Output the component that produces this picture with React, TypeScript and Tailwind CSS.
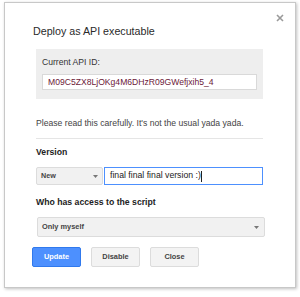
import React from "react";

export default function App() {
  return (
    <div className="w-[300px] h-[297px] bg-white overflow-hidden" style={{ fontFamily: '"Liberation Sans", Arial, sans-serif' }}>
      <div className="relative ml-[4px] mt-[2px] w-[292px] h-[286px] bg-white border border-[#c8c8c8] shadow-[1px_1px_3px_rgba(0,0,0,0.25)]">
        <svg className="absolute left-[271px] top-[11px]" width="8" height="8" viewBox="0 0 8 8">
          <path d="M1 1 L7 7 M7 1 L1 7" stroke="#9a9a9a" strokeWidth="1.6" />
        </svg>
        <div className="pt-[22px] pl-[28px] text-[10.7px] leading-[13px] text-[#2a2a2a]">Deploy as API executable</div>

        <div className="ml-[31px] mt-[11px] w-[227px] h-[50px] bg-[#eeeeee] pt-[8px]">
          <div className="pl-[6px] text-[8.6px] leading-[11px] text-[#333]">Current API ID:</div>
          <div className="ml-[6px] mt-[6px] w-[215px] h-[16px] bg-white border border-[#d9d9d9] px-[5px] flex items-center text-[8.6px] text-[#6b1838]">
            M09C5ZX8LjOKg4M6DHzR09GWefjxih5_4
          </div>
        </div>

        <div className="ml-[31px] mt-[19px] text-[8.65px] leading-[11px] text-[#444]">
          Please read this carefully. It's not the usual yada yada.
        </div>
        <div className="ml-[31px] mt-[9px] w-[227px] h-px bg-[#e5e5e5]" />

        <div className="ml-[31px] mt-[8px] text-[8.7px] leading-[11px] font-bold text-[#222]">Version</div>
        <div className="ml-[31px] mt-[9px] flex h-[18px]">
          <div className="w-[67px] h-full bg-[#f1f1f1] border border-[#dcdcdc] rounded-[2px] flex items-center justify-between pl-[4px] pr-[4px]">
            <span className="text-[7.2px] font-bold text-[#444]">New</span>
            <svg width="5" height="3" viewBox="0 0 5 3"><path d="M0 0 L5 0 L2.5 3 Z" fill="#777" /></svg>
          </div>
          <div className="ml-[1px] w-[159px] h-full bg-white border border-[#4d90fe] flex items-center pl-[5px] text-[8.7px] text-[#222]">
            <span>final final final version :)</span>
            <span className="w-px h-[11px] bg-[#222]" />
          </div>
        </div>

        <div className="ml-[31px] mt-[12px] text-[8.7px] leading-[11px] font-bold text-[#222]">Who has access to the script</div>
        <div className="ml-[32px] mt-[9px] w-[228px] h-[20px] bg-[#f1f1f1] border border-[#dcdcdc] rounded-[2px] flex items-center justify-between pl-[4px] pr-[5px]">
          <span className="text-[7.4px] font-bold text-[#444]">Only myself</span>
          <svg width="5" height="3" viewBox="0 0 5 3"><path d="M0 0 L5 0 L2.5 3 Z" fill="#777" /></svg>
        </div>

        <div className="ml-[27px] mt-[10px] flex gap-[10px]">
          <div className="w-[49px] h-[20px] rounded-[2px] bg-[#4d90fe] border border-[#3079ed] flex items-center justify-center text-[7.4px] font-bold text-white">Update</div>
          <div className="w-[49px] h-[20px] rounded-[2px] bg-[#f3f3f3] border border-[#dcdcdc] flex items-center justify-center text-[7.4px] font-bold text-[#444]">Disable</div>
          <div className="w-[49px] h-[20px] rounded-[2px] bg-[#f3f3f3] border border-[#dcdcdc] flex items-center justify-center text-[7.4px] font-bold text-[#444]">Close</div>
        </div>
      </div>
    </div>
  );
}
